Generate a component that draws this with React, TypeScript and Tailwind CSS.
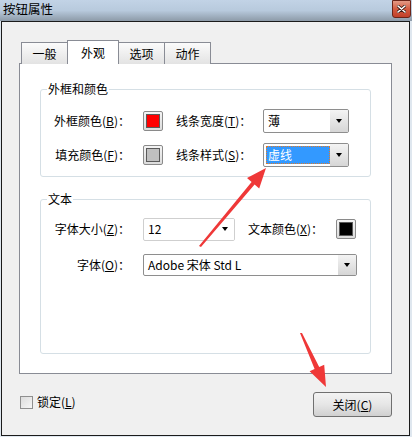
import React from 'react';

const font = { fontFamily: '"Noto Sans CJK SC", "Noto Sans", sans-serif' };

// small black down-pointing triangle used by every combo box
const Caret = () => (
  <span className="block w-0 h-0 border-l-[3.5px] border-r-[3.5px] border-t-[4px] border-l-transparent border-r-transparent border-t-black" />
);

const Swatch = ({ color }: { color: string }) => (
  <div className="w-[20px] h-[20px] rounded-[2px] border border-[#8a8a8a] bg-gradient-to-b from-[#f4f4f4] to-[#dcdcdc] flex items-center justify-center">
    <div className={`w-[14px] h-[14px] border border-[#5a5a5a] ${color}`} />
  </div>
);

const Combo = ({
  value,
  width,
  height = 'h-[24px]',
  selected = false,
  light = false,
}: {
  value: string;
  width: string;
  height?: string;
  selected?: boolean;
  light?: boolean;
}) => (
  <div
    className={`${width} ${height} flex rounded-[2px] border bg-white overflow-hidden ${
      light ? 'border-[#cfcfcf]' : 'border-[#8e8e8e]'
    }`}
  >
    <div className="flex-1 flex items-center pl-[2px] py-[2px]">
      {selected ? (
        <div className="h-full w-full flex items-center pl-[2px] bg-[#3399ff] text-white outline-1 outline-dotted outline-[#e07b2a] -outline-offset-1">
          {value}
        </div>
      ) : (
        <span className="pl-[2px] text-black">{value}</span>
      )}
    </div>
    <div
      className={`w-[18px] flex items-center justify-center ${
        light ? 'bg-white' : 'bg-gradient-to-b from-[#f4f4f4] to-[#d6d6d6]'
      }`}
    >
      <Caret />
    </div>
  </div>
);

const Tab = ({ label, active = false }: { label: string; active?: boolean }) => (
  <div
    className={`-ml-px first:ml-0 -mb-px flex items-center justify-center border border-[#898c95] ${
      active
        ? 'relative z-10 w-[52px] h-[24px] bg-white border-b-0'
        : 'w-[47px] h-[22px] border-b-0 bg-gradient-to-b from-[#fbfbfb] to-[#e3e3e3]'
    }`}
  >
    {label}
  </div>
);

export default function App() {
  return (
    <div
      className="relative w-[412px] h-[437px] overflow-hidden bg-[#dfe7ef] text-[12px] text-black leading-[16px]"
      style={font}
    >
      {/* title bar */}
      <div className="h-[21px] flex items-start justify-between bg-gradient-to-b from-[#c2d3e6] via-[#b8cadd] to-[#8d9aa8]">
        <span className="pl-[3px] pt-[1px] text-[12.5px] text-black">按钮属性</span>
        <div className="mr-[1px] w-[19px] h-[18px] rounded-b-[3px] border border-[#6b2418] bg-gradient-to-b from-[#e39a86] via-[#d25a40] to-[#c2402a] flex items-center justify-center">
          <svg width="9" height="8" viewBox="0 0 9 8">
            <path d="M1 1 L8 7 M8 1 L1 7" stroke="#3a1a14" strokeWidth="3" strokeLinecap="round" />
            <path d="M1 1 L8 7 M8 1 L1 7" stroke="#ffffff" strokeWidth="1.6" strokeLinecap="round" />
          </svg>
        </div>
      </div>

      {/* dialog body */}
      <div className="ml-[1px] w-[409px] h-[415px] border border-[#1b1b1b] bg-[#f0f0f0] pl-[17px] pr-[17px] pt-[18px]">
        <div className="flex items-end ml-[2px]">
          <Tab label="一般" />
          <Tab label="外观" active />
          <Tab label="选项" />
          <Tab label="动作" />
        </div>

        <div className="h-[311px] border border-[#898c95] bg-white pt-[17px] px-[20px]">
          <fieldset className="border border-[#d5dfe5] rounded-[3px] pb-[9px]">
            <legend className="ml-[6px] px-[1px] leading-[16px]">外框和颜色</legend>
            <div className="flex flex-col gap-[10px] mt-[12px]">
              <div className="flex items-center h-[24px]">
                <div className="w-[89px] text-right">
                  外框颜色(<u>B</u>)：
                </div>
                <div className="ml-[13px]">
                  <Swatch color="bg-[#ff0000]" />
                </div>
                <div className="ml-[13px] w-[87px]">
                  线条宽度(<u>T</u>)：
                </div>
                <Combo value="薄" width="w-[86px]" />
              </div>
              <div className="flex items-center h-[24px]">
                <div className="w-[89px] text-right">
                  填充颜色(<u>F</u>)：
                </div>
                <div className="ml-[13px]">
                  <Swatch color="bg-[#c0c0c0]" />
                </div>
                <div className="ml-[13px] w-[87px]">
                  线条样式(<u>S</u>)：
                </div>
                <Combo value="虚线" width="w-[86px]" selected />
              </div>
            </div>
          </fieldset>

          <fieldset className="mt-[14px] h-[163px] border border-[#d5dfe5] rounded-[3px]">
            <legend className="ml-[6px] px-[1px] leading-[16px]">文本</legend>
            <div className="flex flex-col gap-[12px] mt-[10px]">
              <div className="flex items-center h-[24px]">
                <div className="w-[89px] text-right">
                  字体大小(<u>Z</u>)：
                </div>
                <div className="ml-[13px]">
                  <Combo value="12" width="w-[92px]" height="h-[23px]" light />
                </div>
                <div className="ml-[13px] w-[88px]">
                  文本颜色(<u>X</u>)：
                </div>
                <Swatch color="bg-black" />
              </div>
              <div className="flex items-center h-[24px]">
                <div className="w-[89px] text-right">
                  字体(<u>O</u>)：
                </div>
                <div className="ml-[13px]">
                  <Combo value="Adobe 宋体 Std L" width="w-[214px]" height="h-[22px]" />
                </div>
              </div>
            </div>
          </fieldset>
        </div>

        <div className="flex items-start justify-between mt-[18px] pl-[1px]">
          <div className="flex items-center gap-[4px] mt-[2px]">
            <div className="w-[13px] h-[13px] border border-[#8f8f8f] bg-gradient-to-br from-[#dcdcdc] to-[#f6f6f6]" />
            <span>
              锁定(<u>L</u>)
            </span>
          </div>
          <div className="w-[79px] h-[25px] rounded-[3px] border border-[#707070] bg-gradient-to-b from-[#f3f3f3] via-[#e6e6e6] to-[#d0d0d0] flex items-center justify-center">
            关闭(<u>C</u>)
          </div>
        </div>
      </div>

      {/* red annotation arrows drawn over the dialog */}
      <svg className="absolute inset-0 pointer-events-none" width="412" height="437" viewBox="0 0 412 437">
        <polygon
          points="199,246 201,247 254.6,184.6 259.2,188.5 266,168 247,178.1 251.6,182"
          fill="#ef3838"
        />
        <polygon
          points="300,333 302,333 319.2,367 324.2,364.7 326,387 309.6,371.3 314.6,369"
          fill="#ef3838"
        />
      </svg>
    </div>
  );
}
